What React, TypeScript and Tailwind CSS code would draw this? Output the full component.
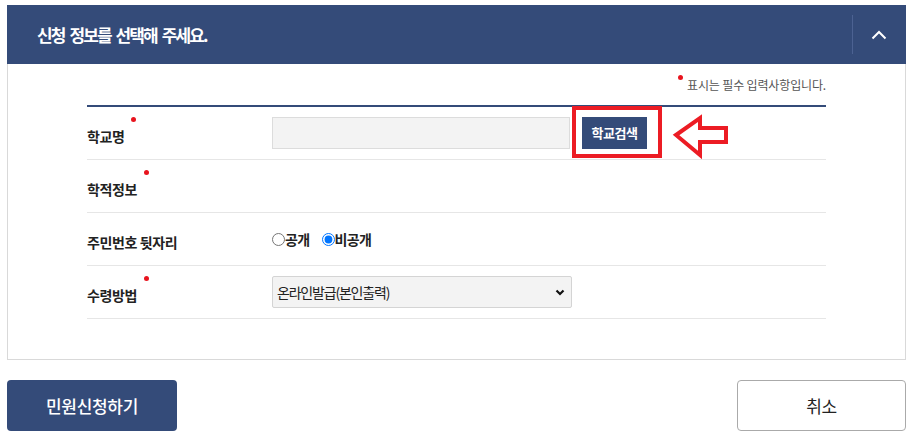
import React, { useState } from 'react';

const RequiredDot: React.FC<{ className?: string }> = ({ className }) => (
  <span className={`absolute w-[5px] h-[5px] rounded-full bg-[#e8141e] ${className ?? ''}`} />
);

const Label: React.FC<{ text: string; required?: boolean }> = ({ text, required }) => (
  <div className="w-[185px] shrink-0 pt-[3px]">
    <span className="relative text-[14px] font-bold text-[#222] tracking-[-0.4px]">
      {text}
      {required && <RequiredDot className="-right-[12px] -top-[9px]" />}
    </span>
  </div>
);

const App: React.FC = () => {
  const [open, setOpen] = useState('private');
  const [method, setMethod] = useState('online');

  return (
    <div className="min-h-screen bg-white px-[7px] pt-[5px] font-['Noto_Sans_CJK_KR','Liberation_Sans',sans-serif]">
      {/* header */}
      <div className="h-[59px] bg-[#344b79] flex items-center">
        <h2 className="flex-1 pl-[30px] text-[17px] font-bold text-white tracking-[-1.9px] [word-spacing:3px]">
          신청 정보를 선택해 주세요.
        </h2>
        <div className="w-[54px] h-[39px] border-l border-[#4c6292] flex items-center justify-center pr-[2px]">
          <svg width="16" height="10" viewBox="0 0 16 10" fill="none">
            <path d="M1.5 8.5 L8 2 L14.5 8.5" stroke="white" strokeWidth="2" />
          </svg>
        </div>
      </div>

      {/* panel */}
      <div className="border border-t-0 border-[#d9d9d9] px-[79px] pb-[40px]">
        <div className="h-[41px] flex items-center justify-end">
          <span className="relative pl-[9px] text-[12px] text-[#555] tracking-[-0.15px]">
            <RequiredDot className="left-0 -top-[1px]" />
            표시는 필수 입력사항입니다.
          </span>
        </div>

        <div className="border-t-2 border-[#344b79]">
          {/* 학교명 */}
          <div className="relative h-[53px] border-b border-[#e6e6e6] flex items-center">
            <Label text="학교명" required />
            <input
              type="text"
              className="w-[298px] h-[32px] bg-[#f3f3f3] border border-[#dcdcdc] outline-none px-2 text-[14px]"
            />
            <button className="ml-[12px] w-[65px] h-[32px] bg-[#344b79] text-white text-[13px] font-bold tracking-[-0.5px]">
              학교검색
            </button>
            <div className="absolute left-[485px] -top-[1px] w-[90px] h-[52px] border-[4px] border-[#ec1c24]" />
            <svg
              className="absolute left-[583px] top-[4px]"
              width="64"
              height="50"
              viewBox="0 0 64 50"
              fill="none"
            >
              <path
                d="M6 24 L30 7 L30 17 L56 17 L56 31 L30 31 L30 44 Z"
                stroke="#ec1c24"
                strokeWidth="4"
                strokeLinejoin="miter"
              />
            </svg>
          </div>

          {/* 학적정보 */}
          <div className="h-[53px] border-b border-[#e6e6e6] flex items-center">
            <Label text="학적정보" required />
          </div>

          {/* 주민번호 뒷자리 */}
          <div className="h-[53px] border-b border-[#e6e6e6] flex items-center">
            <Label text="주민번호 뒷자리" />
            <label className="flex items-center text-[14px] font-bold text-[#222] tracking-[-0.6px]">
              <input
                type="radio"
                name="open"
                className="m-0 w-[13px] h-[13px]"
                checked={open === 'public'}
                onChange={() => setOpen('public')}
              />
              공개
            </label>
            <label className="ml-[12px] flex items-center text-[14px] font-bold text-[#222] tracking-[-0.6px]">
              <input
                type="radio"
                name="open"
                className="m-0 w-[13px] h-[13px]"
                checked={open === 'private'}
                onChange={() => setOpen('private')}
              />
              비공개
            </label>
          </div>

          {/* 수령방법 */}
          <div className="h-[53px] border-b border-[#e6e6e6] flex items-center">
            <Label text="수령방법" required />
            <div className="relative w-[300px] h-[32px]">
              <select
                value={method}
                onChange={(e) => setMethod(e.target.value)}
                className="appearance-none w-full h-full bg-[#f3f3f3] border border-[#d4d4d4] rounded-[2px] pl-[4px] text-[14px] text-[#222] tracking-[-1.2px] outline-none"
              >
                <option value="online">온라인발급(본인출력)</option>
              </select>
              <svg
                className="absolute right-[7px] top-[13px] pointer-events-none"
                width="10"
                height="7"
                viewBox="0 0 10 7"
                fill="none"
              >
                <path d="M1.5 1.5 L5 5 L8.5 1.5" stroke="#111" strokeWidth="2.2" />
              </svg>
            </div>
          </div>
        </div>
      </div>

      {/* buttons */}
      <div className="mt-[20px] flex justify-between">
        <button className="w-[170px] h-[51px] rounded-[4px] bg-[#344b79] text-white text-[17px] font-medium tracking-[-0.3px]">
          민원신청하기
        </button>
        <button className="w-[169px] h-[51px] rounded-[4px] bg-white border border-[#aaa] text-[#222] text-[17px] tracking-[-0.3px]">
          취소
        </button>
      </div>
    </div>
  );
};

export default App;
